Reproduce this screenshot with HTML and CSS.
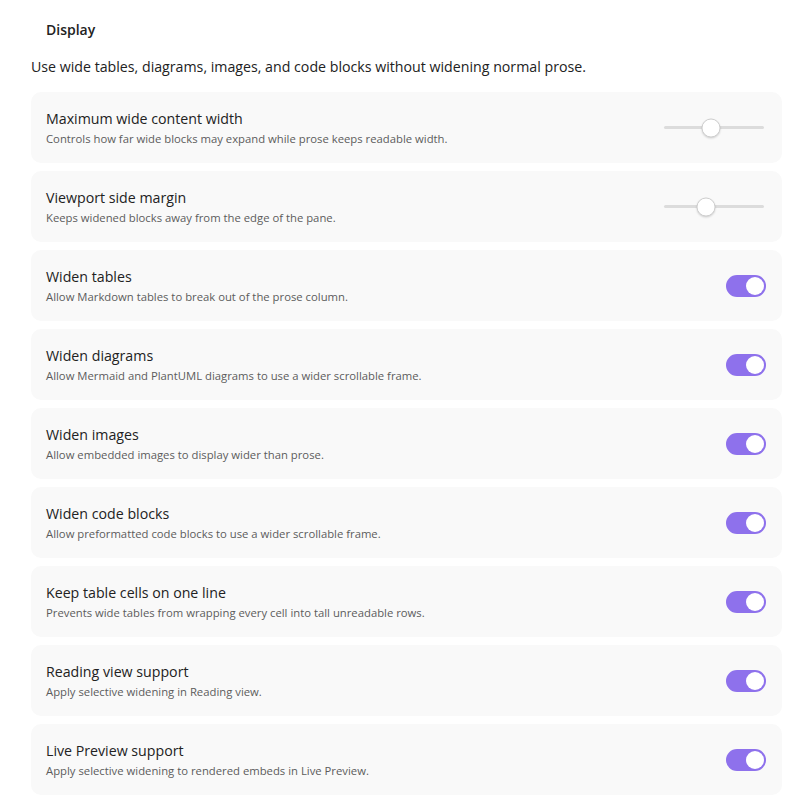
FILE: index.html
```html
<!DOCTYPE html>
<html lang="en">

<head>
    <meta charset="UTF-8">
    <meta name="viewport" content="width=device-width, initial-scale=1.0">
    <title>Display settings</title>
    <link rel="stylesheet" href="styles.css">
</head>

<body>

    <div class="settings">
        <h3 class="heading">Display</h3>
        <p class="intro">Use wide tables, diagrams, images, and code blocks without widening normal prose.</p>

        <div class="item">
            <div class="info">
                <div class="name">Maximum wide content width</div>
                <div class="desc">Controls how far wide blocks may expand while prose keeps readable width.</div>
            </div>
            <div class="slider"><span class="thumb" style="left: 47%"></span></div>
        </div>

        <div class="item">
            <div class="info">
                <div class="name">Viewport side margin</div>
                <div class="desc">Keeps widened blocks away from the edge of the pane.</div>
            </div>
            <div class="slider"><span class="thumb" style="left: 42%"></span></div>
        </div>

        <div class="item">
            <div class="info">
                <div class="name">Widen tables</div>
                <div class="desc">Allow Markdown tables to break out of the prose column.</div>
            </div>
            <div class="toggle on"></div>
        </div>

        <div class="item">
            <div class="info">
                <div class="name">Widen diagrams</div>
                <div class="desc">Allow Mermaid and PlantUML diagrams to use a wider scrollable frame.</div>
            </div>
            <div class="toggle on"></div>
        </div>

        <div class="item">
            <div class="info">
                <div class="name">Widen images</div>
                <div class="desc">Allow embedded images to display wider than prose.</div>
            </div>
            <div class="toggle on"></div>
        </div>

        <div class="item">
            <div class="info">
                <div class="name">Widen code blocks</div>
                <div class="desc">Allow preformatted code blocks to use a wider scrollable frame.</div>
            </div>
            <div class="toggle on"></div>
        </div>

        <div class="item">
            <div class="info">
                <div class="name">Keep table cells on one line</div>
                <div class="desc">Prevents wide tables from wrapping every cell into tall unreadable rows.</div>
            </div>
            <div class="toggle on"></div>
        </div>

        <div class="item">
            <div class="info">
                <div class="name">Reading view support</div>
                <div class="desc">Apply selective widening in Reading view.</div>
            </div>
            <div class="toggle on"></div>
        </div>

        <div class="item">
            <div class="info">
                <div class="name">Live Preview support</div>
                <div class="desc">Apply selective widening to rendered embeds in Live Preview.</div>
            </div>
            <div class="toggle on"></div>
        </div>
    </div>

</body>

</html>
```

FILE: styles.css
```css
body {
    font-family: "Open Sans", "Noto Sans", sans-serif;
    margin: 0;
    padding: 0;
    background-color: #ffffff;
    color: #222222;
}

.settings {
    padding: 19px 14px 0 31px;
}

.heading {
    margin: 0 0 0 15px;
    font-size: 14px;
    font-weight: 600;
    line-height: 22px;
}

.intro {
    margin: 16px 0 15px 0;
    font-size: 14.2px;
    line-height: 20px;
}

.item {
    display: flex;
    align-items: center;
    justify-content: space-between;
    background-color: #f9f9f9;
    border-radius: 10px;
    padding: 0 16px 0 15px;
    height: 71px;
    margin-bottom: 8px;
}

.name {
    font-size: 14.2px;
    line-height: 20px;
    margin-bottom: 2px;
}

.desc {
    font-size: 11.3px;
    line-height: 16px;
    color: #5c5c5c;
}

.slider {
    position: relative;
    width: 100px;
    height: 3px;
    background-color: #dcdcdc;
    border-radius: 2px;
    margin-right: 2px;
}

.thumb {
    position: absolute;
    top: 50%;
    width: 17px;
    height: 17px;
    border-radius: 50%;
    background: white;
    border: 1px solid #cfcfcf;
    box-shadow: 0 1px 2px rgba(0, 0, 0, 0.15);
    transform: translate(-50%, -50%);
}

.toggle {
    position: relative;
    width: 40px;
    height: 22px;
    border-radius: 11px;
    background-color: #8e71ec;
}

.toggle::after {
    content: "";
    position: absolute;
    top: 2px;
    right: 2px;
    width: 18px;
    height: 18px;
    border-radius: 50%;
    background: white;
}
```
